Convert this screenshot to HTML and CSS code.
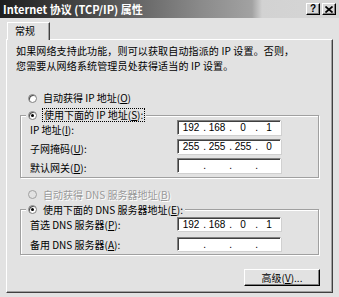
FILE: index.html
```html
<!DOCTYPE html>
<html>
<head>
<meta charset="utf-8">
<title>Internet 协议 (TCP/IP) 属性</title>
<link rel="stylesheet" href="styles.css">
</head>
<body>
<div class="window">
  <div class="titlebar">
    <span class="title">Internet 协议 (TCP/IP) 属性</span>
    <div class="tbtns">
      <span class="tbtn help">?</span>
      <span class="tbtn close"><svg width="8" height="7" viewBox="0 0 8 7"><path d="M0.5 0.5 L7.5 6.5 M7.5 0.5 L0.5 6.5" stroke="#000" stroke-width="1.7"/></svg></span>
    </div>
  </div>
  <div class="client">
    <div class="tabs"><div class="tab">常规</div></div>
    <div class="panel">
      <p class="intro">如果网络支持此功能，则可以获取自动指派的 IP 设置。否则，<br>您需要从网络系统管理员处获得适当的 IP 设置。</p>

      <div class="radio r-first"><span class="dot"></span><span class="rlabel">自动获得 IP 地址(<u>O</u>)</span></div>

      <div class="group g1">
        <div class="legend radio"><span class="dot on"></span><span class="rlabel focus">使用下面的 IP 地址(<u>S</u>):</span></div>
        <div class="rows rows1">
          <span class="lbl">IP 地址(<u>I</u>):</span>
          <div class="ip"><span class="n">192</span><span class="d">.</span><span class="n">168</span><span class="d">.</span><span class="n">0</span><span class="d">.</span><span class="n">1</span></div>
          <span class="lbl">子网掩码(<u>U</u>):</span>
          <div class="ip"><span class="n">255</span><span class="d">.</span><span class="n">255</span><span class="d">.</span><span class="n">255</span><span class="d">.</span><span class="n">0</span></div>
          <span class="lbl">默认网关(<u>D</u>):</span>
          <div class="ip"><span class="n"></span><span class="d">.</span><span class="n"></span><span class="d">.</span><span class="n"></span><span class="d">.</span><span class="n"></span></div>
        </div>
      </div>

      <div class="radio r-dns disabled"><span class="dot"></span><span class="rlabel">自动获得 DNS 服务器地址(<u>B</u>)</span></div>

      <div class="group g2">
        <div class="legend radio"><span class="dot on"></span><span class="rlabel">使用下面的 DNS 服务器地址(<u>E</u>):</span></div>
        <div class="rows rows2">
          <span class="lbl">首选 DNS 服务器(<u>P</u>):</span>
          <div class="ip"><span class="n">192</span><span class="d">.</span><span class="n">168</span><span class="d">.</span><span class="n">0</span><span class="d">.</span><span class="n">1</span></div>
          <span class="lbl">备用 DNS 服务器(<u>A</u>):</span>
          <div class="ip"><span class="n"></span><span class="d">.</span><span class="n"></span><span class="d">.</span><span class="n"></span><span class="d">.</span><span class="n"></span></div>
        </div>
      </div>

      <div class="actions"><button class="btn">高级(<u>V</u>)...</button></div>
    </div>
  </div>
</div>
</body>
</html>
```
FILE: styles.css
```css
* { box-sizing: border-box; }
html, body { margin: 0; padding: 0; }
body {
  width: 339px;
  height: 297px;
  overflow: hidden;
  background: #e2e2e2;
  font-family: "Noto Sans CJK SC", "Noto Sans", sans-serif;
  font-size: 10px;
  color: #000;
}
.window {
  width: 339px;
  height: 297px;
  display: flex;
  flex-direction: column;
  background: #e2e2e2;
}
.titlebar {
  height: 18px;
  display: flex;
  align-items: center;
  justify-content: space-between;
  padding: 0 3px 0 3px;
  background: linear-gradient(to right, #1e1e1e 0, #4a4a4a 90px, #8a8a8a 200px, #a2a2a2 252px, #d2d2d2 262px, #d6d6d6 100%);
}
.title {
  color: #fff;
  font-weight: bold;
  font-size: 11px;
  line-height: 18px;
  white-space: nowrap;
}
.tbtns { display: flex; gap: 2px; }
.tbtn {
  width: 14px;
  height: 12px;
  display: flex;
  align-items: center;
  justify-content: center;
  background: #d8d8d8;
  border-top: 1px solid #fff;
  border-left: 1px solid #fff;
  border-right: 1px solid #000;
  border-bottom: 1px solid #000;
  box-shadow: inset -1px -1px 0 #808080;
  font-family: "Liberation Sans", sans-serif;
  font-weight: bold;
  font-size: 10px;
  line-height: 10px;
}
.client {
  flex: 1;
  padding: 4px 6px 4px 6px;
  display: flex;
  flex-direction: column;
}
.tabs { display: flex; height: 17px; padding-left: 1px; }
.tab {
  width: 43px;
  height: 18px;
  margin-bottom: -1px;
  background: #e2e2e2;
  border-top: 1px solid #fff;
  border-left: 1px solid #fff;
  border-right: 1px solid #404040;
  box-shadow: inset -1px 0 0 #a0a0a0;
  padding-left: 7px;
  line-height: 16px;
  position: relative;
  z-index: 1;
}
.panel {
  height: 254px;
  border-top: 1px solid #fff;
  border-left: 1px solid #fff;
  border-right: 1px solid #404040;
  border-bottom: 1px solid #404040;
  box-shadow: inset -1px -1px 0 #a0a0a0;
  display: flex;
  flex-direction: column;
}
.intro {
  margin: 4px 0 0 9px;
  line-height: 14.5px;
  white-space: nowrap;
  letter-spacing: 0.15px;
}
.radio {
  display: flex;
  align-items: center;
  height: 12px;
  line-height: 12px;
  white-space: nowrap;
}
.r-first { margin: 19px 0 0 21px; }
.r-dns { margin: 10px 0 0 21px; height: 13px; line-height: 13px; }
.dot {
  width: 9px;
  height: 9px;
  border-radius: 50%;
  background: #fff;
  border: 1px solid #808080;
  box-shadow: inset 1px 1px 0 #505050;
  margin-right: 6px;
  flex: none;
  display: flex;
  align-items: center;
  justify-content: center;
}
.dot.on::after {
  content: "";
  width: 3px;
  height: 3px;
  border-radius: 50%;
  background: #000;
}
.disabled { color: #9a9a9a; text-shadow: 1px 1px 0 #fff; }
.disabled .dot { background: #e2e2e2; border-color: #a0a0a0; box-shadow: none; }
.focus { outline: 1px dotted #000; outline-offset: 0; padding: 0 1px; }
.group {
  margin: 11px 13px 0 13px;
  border: 1px solid #a0a0a0;
  box-shadow: 1px 1px 0 #fff, inset 1px 1px 0 #fff;
}
.g2 { margin-top: 8px; }
.legend {
  margin: -7px 0 0 5px;
  padding: 0 2px;
  width: fit-content;
  background: #e2e2e2;
}
.g2 .legend { height: 13px; line-height: 13px; }
.rows {
  display: grid;
  grid-template-columns: 147px 104px;
  padding-left: 9px;
}
.rows1 { margin-top: -1px; row-gap: 4px; grid-auto-rows: 15px; padding-bottom: 4px; }
.rows2 { margin-top: 1px; row-gap: 6px; grid-auto-rows: 14px; padding-bottom: 3px; }
.lbl { white-space: nowrap; line-height: 12px; }
.rows1 .lbl { padding-top: 4px; }
.rows2 .lbl { padding-top: 2px; }
.ip {
  height: 100%;
  background: #fff;
  border-top: 1px solid #808080;
  border-left: 1px solid #808080;
  border-right: 1px solid #fff;
  border-bottom: 1px solid #fff;
  box-shadow: inset 1px 1px 0 #404040, 1px 1px 0 #d0d0d0;
  display: flex;
  align-items: center;
  padding-left: 3px;
  font-family: "Liberation Sans", sans-serif;
  font-size: 10px;
}
.ip .n { width: 20px; text-align: center; }
.ip .d { width: 6px; text-align: right; padding-right: 1px; }
.actions { display: flex; justify-content: flex-end; margin: 14px 12px 0 0; }
.btn {
  width: 76px;
  height: 17px;
  padding: 0;
  background: #e2e2e2;
  font-family: "Noto Sans CJK SC", sans-serif;
  font-size: 10px;
  color: #000;
  border-top: 1px solid #fff;
  border-left: 1px solid #fff;
  border-right: 1px solid #000;
  border-bottom: 1px solid #000;
  box-shadow: inset -1px -1px 0 #808080;
  line-height: 14px;
}
```
